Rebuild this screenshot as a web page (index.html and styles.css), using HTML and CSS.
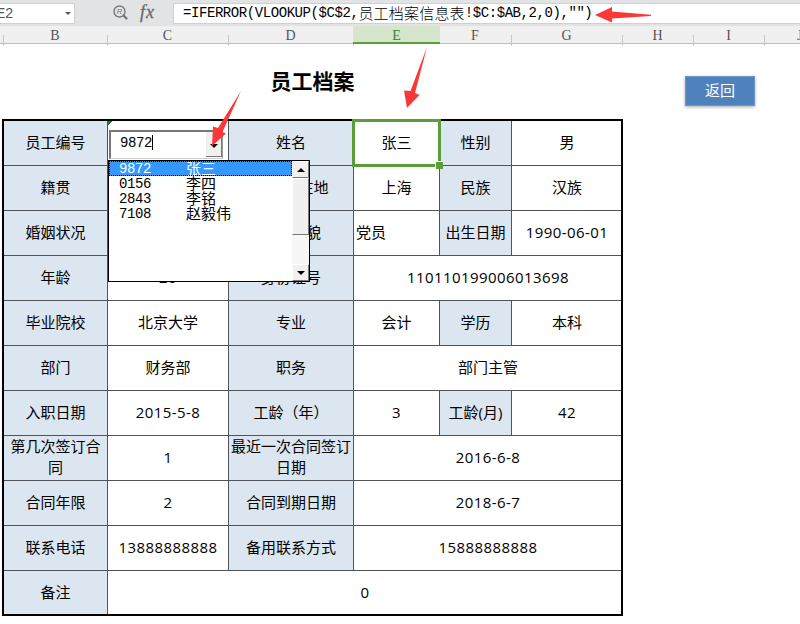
FILE: index.html
```
<!DOCTYPE html>
<html lang="zh-CN">
<head>
  <meta charset="UTF-8">
  <meta name="viewport" content="width=device-width, initial-scale=1.0">
  <title>员工档案</title>
  <link rel="stylesheet" href="styles.css">
</head>
<body>

  <div class="toolbar">
    <div class="name-box"><span>E2</span><i class="caret"></i></div>
    <div class="tools">
      <svg class="search" width="16" height="16" viewBox="0 0 16 16">
        <circle cx="6.5" cy="6.5" r="5.5" fill="none" stroke="#77787a" stroke-width="1.4"/>
        <path d="M10.500 10.500L13.500 13.500" stroke="#77787a" stroke-width="2.4" stroke-linecap="round"/>
        <text x="3.8" y="9.2" font-size="7.5">R</text>
      </svg>
      <span class="fx">fx</span>
    </div>
    <div class="formula"><span>=IFERROR(VLOOKUP($C$2,</span><span class="cjk">员工档案信息表</span><span>!$C:$AB,2,0),"")</span></div>
  </div>

  <div class="columns">
    <div></div>
    <div>B</div>
    <div>C</div>
    <div>D</div>
    <div class="active">E</div>
    <div>F</div>
    <div>G</div>
    <div>H</div>
    <div>I</div>
    <div class="last">J</div>
  </div>

  <div class="sheet">
    <div class="heading">
      <h1>员工档案</h1>
      <button class="back">返回</button>
    </div>

    <div class="archive">
      <div class="label">员工编号</div>
      <div class="code">
        <div class="combo"><span>9872</span><i class="cursor"></i><b class="combo-btn"><i class="down"></i></b></div>
        <div class="dropdown">
          <div class="options">
            <div class="option selected"><span>9872</span><span>张三</span></div>
            <div class="option"><span>0156</span><span>李四</span></div>
            <div class="option"><span>2843</span><span>李铭</span></div>
            <div class="option"><span>7108</span><span>赵毅伟</span></div>
          </div>
          <div class="scrollbar">
            <b class="scroll-btn"><i class="up"></i></b>
            <b class="thumb"></b>
            <b class="scroll-btn last"><i class="down"></i></b>
          </div>
        </div>
      </div>
      <div class="label">姓名</div>
      <div class="current">张三</div>
      <div class="label">性别</div>
      <div class="end">男</div>

      <div class="label">籍贯</div>
      <div></div>
      <div class="label">户口所在地</div>
      <div>上海</div>
      <div class="label">民族</div>
      <div class="end">汉族</div>

      <div class="label">婚姻状况</div>
      <div></div>
      <div class="label">政治面貌</div>
      <div class="left">党员</div>
      <div class="label">出生日期</div>
      <div class="end num">1990-06-01</div>

      <div class="label">年龄</div>
      <div class="num">26</div>
      <div class="label">身份证号</div>
      <div class="wide end num">110110199006013698</div>

      <div class="label">毕业院校</div>
      <div>北京大学</div>
      <div class="label">专业</div>
      <div>会计</div>
      <div class="label">学历</div>
      <div class="end">本科</div>

      <div class="label">部门</div>
      <div>财务部</div>
      <div class="label">职务</div>
      <div class="wide end">部门主管</div>

      <div class="label">入职日期</div>
      <div class="num">2015-5-8</div>
      <div class="label">工龄（年）</div>
      <div class="num">3</div>
      <div class="label">工龄(月)</div>
      <div class="end num">42</div>

      <div class="label">第几次签订合同</div>
      <div class="num">1</div>
      <div class="label">最近一次合同签订日期</div>
      <div class="wide end num">2016-6-8</div>

      <div class="label">合同年限</div>
      <div class="num">2</div>
      <div class="label">合同到期日期</div>
      <div class="wide end num">2018-6-7</div>

      <div class="label">联系电话</div>
      <div class="num">13888888888</div>
      <div class="label">备用联系方式</div>
      <div class="wide end num">15888888888</div>

      <div class="label bottom">备注</div>
      <div class="full end bottom num">0</div>
    </div>
  </div>

  <!-- red arrows -->
  <svg class="arrows" width="800" height="624" viewBox="0 0 800 624">
    <path d="M595 15L612 7L612 11.500L651 14.800V16L612 18.500V22.500Z"/>
    <path d="M427 47L415 93L419.500 95L407 108L404 90.500L410.500 91Z"/>
    <path d="M241 91L222.500 132L226 133.500L212 146L213 126.500L218 128Z"/>
  </svg>

</body>
</html>
```
FILE: styles.css
```
* {
  box-sizing: border-box;
}

body {
  margin: 0;
  height: 624px;
  overflow: hidden;
  background: #fff;
  color: #000;
  font-family: "Open Sans", "Noto Sans CJK SC", sans-serif;
  font-size: 15px;
}

.toolbar {
  display: flex;
  height: 26px;
  padding: 3px 0 2px;
  background: #e2e3e5;
}

.name-box {
  display: flex;
  align-items: center;
  justify-content: space-between;
  width: 75px;
  height: 21px;
  padding-right: 3px;
  overflow: hidden;
  background: #fff;
  border: 1px solid #d0d0d2;
  border-left: 0;
  color: #555;
  font: 14px "Liberation Mono", monospace;
  letter-spacing: -0.4px;
}

.name-box span {
  margin-left: -3px;
}

.caret {
  border: 3px solid transparent;
  border-top-color: #555;
  border-bottom: 0;
}

.tools {
  display: flex;
  align-items: center;
  width: 98px;
  padding-left: 38px;
  color: #67686a;
}

.search {
  margin-top: -1px;
}

.search text {
  fill: #77787a;
  font-family: "Liberation Sans", sans-serif;
  font-style: italic;
}

.fx {
  margin: -2px 0 0 11px;
  font: italic 18px "Liberation Serif", serif;
  letter-spacing: 1px;
  -webkit-text-stroke: 0.3px #67686a;
}

.formula {
  display: flex;
  flex: 1;
  align-items: center;
  height: 21px;
  padding-left: 9px;
  background: #fff;
  border: 1px solid #d0d0d2;
  border-right: 0;
  font: 14px/19px "Liberation Mono", monospace;
  letter-spacing: -0.43px;
  white-space: pre;
}

.formula .cjk {
  margin-top: -3px;
  font: 300 15px/19px "Noto Sans CJK SC", sans-serif;
  letter-spacing: 0.2px;
}

.columns {
  display: grid;
  grid-template-columns: 4px 104px 121px 125px 86px 72px 111px 71px 71px 35px;
  height: 18px;
  background: #f0f0f0;
  border-bottom: 1px solid #bdbdbd;
  color: #555;
  font: 14px/20px "Liberation Serif", serif;
  text-align: center;
}

.columns div {
  padding-right: 2px;
  background: linear-gradient(#c8c8c8, #c8c8c8) right bottom / 1px 11px no-repeat;
}

.columns .active {
  height: 18px;
  margin-left: -1px;
  padding-right: 0;
  background: #d5e6cd;
  border-bottom: 2px solid #5a9e3a;
  color: #3f7f2c;
}

.columns .last {
  padding: 0 0 0 32px;
  overflow: hidden;
  background: none;
}

.sheet {
  padding-left: 2px;
}

.heading {
  display: flex;
  height: 75px;
}

h1 {
  width: 621px;
  margin: 20px 0 0;
  font: bold 21px/32px "Noto Sans CJK SC", sans-serif;
  text-align: center;
}

.back {
  width: 70px;
  height: 30px;
  margin: 32px 0 0 62px;
  padding: 0 0 3px;
  background: #4f81bd;
  border: 1px solid #6f98c8;
  box-shadow: 0 1px 3px rgba(0, 0, 0, 0.35);
  color: #fff;
  font: 15px/24px "Noto Sans CJK SC", sans-serif;
}

.archive {
  display: grid;
  grid-template-columns: 104px 121px 125px 86px 72px 109px;
  grid-template-rows: repeat(10, 45px) 43px;
  width: 621px;
  border: 2px solid #000;
}

.archive > div {
  display: flex;
  align-items: center;
  justify-content: center;
  padding-bottom: 2px;
  border-right: 1px solid #505358;
  border-bottom: 1px solid #505358;
  line-height: 21px;
  text-align: center;
}

.archive > .label {
  background: #dce6f1;
}

.archive > .num {
  letter-spacing: 0.42px;
}

.archive > .left {
  justify-content: flex-start;
  padding-left: 2px;
}

.archive > .end {
  padding-left: 1px;
  border-right: 0;
}

.archive > .bottom {
  padding-bottom: 0;
  border-bottom: 0;
}

.archive > .wide {
  grid-column: span 3;
}

.archive > .full {
  grid-column: span 5;
}

.archive > .current {
  position: relative;
}

/* selected cell */
.current::before {
  content: "";
  position: absolute;
  inset: -2px;
  border: 3px solid #5a9e3a;
}

.current::after {
  content: "";
  position: absolute;
  right: -4px;
  bottom: -4px;
  width: 7px;
  height: 7px;
  background: #5a9e3a;
  border: solid #fff;
  border-width: 1px 0 0 1px;
}

.archive > .code {
  position: relative;
  justify-content: flex-start;
  padding: 0 0 0 1px;
  background: linear-gradient(135deg, #1e7b2c 3px, transparent 3px) no-repeat;
}

.combo {
  display: flex;
  align-items: center;
  width: 114px;
  height: 29px;
  margin-top: 2px;
  padding-left: 9px;
  background: #fff;
  border: 2px solid #777;
  border-right: 1px solid #999;
  border-bottom: 1px solid #ccc;
  font: 14px "Liberation Mono", monospace;
  letter-spacing: -0.4px;
}

.combo span {
  margin-top: -4px;
}

.cursor {
  width: 1px;
  height: 15px;
  margin-top: -4px;
  background: #000;
}

.combo-btn {
  display: flex;
  align-items: center;
  justify-content: center;
  width: 16px;
  height: 25px;
  margin-left: auto;
  padding-top: 3px;
  background: #f0f0f0;
  border-right: 1px solid #777;
  border-bottom: 1px solid #777;
}

.down,
.up {
  border: 4px solid transparent;
}

.down {
  border-top-color: #000;
  border-bottom: 0;
}

.up {
  border-bottom-color: #000;
  border-top: 0;
}

.dropdown {
  position: absolute;
  top: 39px;
  left: 0;
  z-index: 2;
  display: flex;
  width: 202px;
  height: 122px;
  background: #fff;
  border: 1px solid #000;
}

.options {
  flex: 1;
  font: 14px/17px "Liberation Mono", monospace;
  text-align: left;
}

.option {
  display: flex;
  height: 15px;
  padding-left: 10px;
}

.option span:first-child {
  width: 67px;
  letter-spacing: -0.4px;
}

.option span:last-child {
  font: 15px/13px "Noto Sans CJK SC", sans-serif;
}

.option.selected {
  background: #3399ff;
  outline: 1px dotted #000;
  outline-offset: -1px;
  color: #fff;
}

.scrollbar {
  display: flex;
  flex-direction: column;
  width: 17px;
  background: #f7f7f7;
}

.scroll-btn,
.thumb {
  background: #f0f0f0;
  border: 1px solid #fff;
  border-right-color: #777;
  border-bottom-color: #777;
}

.scroll-btn {
  display: flex;
  align-items: center;
  justify-content: center;
  height: 17px;
}

.thumb {
  height: 57px;
}

.scroll-btn.last {
  margin-top: auto;
}

.arrows {
  position: absolute;
  top: 0;
  left: 0;
  z-index: 3;
  fill: #fb3838;
  pointer-events: none;
}
```
